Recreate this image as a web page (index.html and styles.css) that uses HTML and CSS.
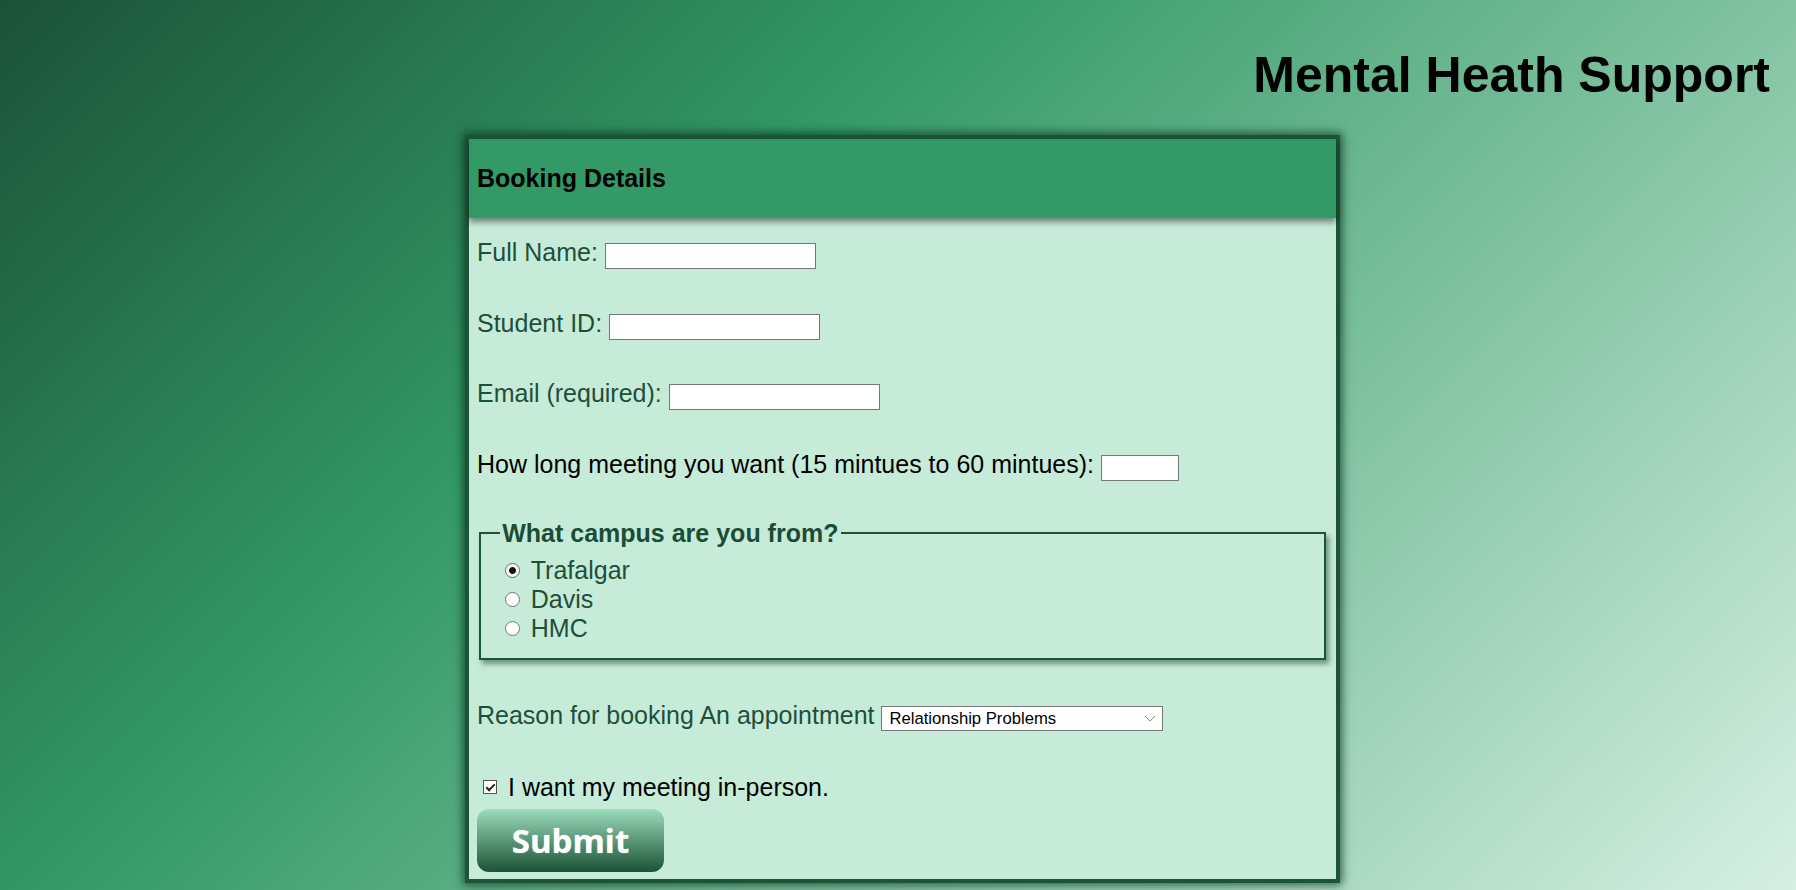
FILE: index.html
```html
<!DOCTYPE html>
<html lang="en">
<head>
<meta charset="utf-8">
<title>Mental Heath Support</title>
<link rel="stylesheet" href="styles.css">
</head>
<body>
<h1 class="site-title">Mental Heath Support</h1>
<main class="card">
  <div class="card-head"><h2 class="card-title">Booking Details</h2></div>
  <form class="card-body">
    <p class="row green"><label for="fullname">Full Name:</label> <input type="text" id="fullname" class="field"></p>
    <p class="row green"><label for="sid">Student ID:</label> <input type="text" id="sid" class="field"></p>
    <p class="row green"><label for="email">Email (required):</label> <input type="text" id="email" class="field"></p>
    <p class="row dark"><label for="dur">How long meeting you want (15 mintues to 60 mintues):</label> <input type="text" id="dur" class="field short"></p>
    <fieldset class="campus">
      <legend class="campus-legend">What campus are you from?</legend>
      <label class="choice"><input type="radio" name="campus" class="radio" checked><span>Trafalgar</span></label>
      <label class="choice"><input type="radio" name="campus" class="radio"><span>Davis</span></label>
      <label class="choice"><input type="radio" name="campus" class="radio"><span>HMC</span></label>
    </fieldset>
    <p class="row green reason"><label for="reason">Reason for booking An appointment</label> <select id="reason" class="picker">
      <option>Relationship Problems</option>
      <option>Stress</option>
      <option>Anxiety</option>
    </select></p>
    <label class="check-row"><input type="checkbox" class="check" checked><span>I want my meeting in-person.</span></label>
    <button type="button" class="submit">Submit</button>
  </form>
</main>
</body>
</html>
```

FILE: styles.css
```css
html {
  height: 100%;
  background: linear-gradient(135deg, #1b5238 0%, #339966 35%, #d6f0e3 100%);
}

body {
  margin: 0;
  min-height: 100%;
  font-family: "Liberation Sans", Arial, sans-serif;
  font-size: 25px;
  overflow: hidden;
}

.site-title {
  margin: 46px 26px 0 0;
  text-align: right;
  font-size: 50px;
  font-weight: bold;
  line-height: normal;
  color: #000;
}

.card {
  display: block;
  box-sizing: content-box;
  width: 867px;
  margin: 31px 0 0 calc(50% - 433px);
  border: 4px solid #1b5438;
  background: #c6ebd9;
  box-shadow: 0 0 9px 2px rgba(12, 48, 30, 0.75);
}

.card-head {
  position: relative;
  height: 79px;
  display: flex;
  align-items: center;
  padding: 0 8px;
  background: #339966;
  box-shadow: 0 4px 6px rgba(0, 0, 0, 0.45);
}

.card-title {
  margin: 0;
  font-size: 25px;
  font-weight: bold;
  line-height: normal;
  color: #000;
}

.card-body {
  display: block;
  padding: 20px 8px 7px 8px;
}

.row {
  margin: 39.5px 0 0 0;
  line-height: normal;
  white-space: nowrap;
}

.row:first-child {
  margin-top: 0;
}

.green {
  color: #1f4f39;
}

.dark {
  color: #000;
}

.field {
  display: inline-block;
  box-sizing: border-box;
  width: 211px;
  height: 26px;
  margin: 0;
  padding: 0 3px;
  border: 1px solid #767676;
  background: #fff;
  font-family: "Liberation Sans", Arial, sans-serif;
  font-size: 16.67px;
  vertical-align: baseline;
}

.short {
  width: 78px;
}

.campus {
  margin: 38px 2px 0 2px;
  padding: 8.75px 18.75px 15.6px 18.75px;
  border: 2px solid #1b5438;
  box-shadow: 3px 4px 5px rgba(20, 60, 40, 0.5);
  min-width: 0;
}

.campus-legend {
  padding: 0 2.5px;
  font-size: 25px;
  font-weight: bold;
  line-height: normal;
  color: #1b4d35;
}

.choice {
  display: flex;
  align-items: center;
  height: 28.75px;
  color: #1f4f39;
}

.radio {
  appearance: none;
  -webkit-appearance: none;
  box-sizing: border-box;
  width: 15px;
  height: 15px;
  margin: 0 11px 0 5px;
  border: 1px solid #767676;
  border-radius: 50%;
  background: #fff;
  flex: none;
}

.radio:checked {
  background: radial-gradient(circle, #111 0, #111 3px, #f4f4f4 3.8px, #fff 100%);
  border-color: #6a6a6a;
}

.reason {
  margin-top: 41px;
}

.picker {
  appearance: none;
  -webkit-appearance: none;
  box-sizing: border-box;
  width: 282px;
  height: 25px;
  margin: 0;
  padding: 0 0 0 7px;
  border: 1px solid #767676;
  border-radius: 0;
  background-color: #fff;
  background-image:
    linear-gradient(45deg, transparent calc(50% - 0.7px), #8a8a8a calc(50% - 0.7px), #8a8a8a calc(50% + 0.7px), transparent calc(50% + 0.7px)),
    linear-gradient(-45deg, transparent calc(50% - 0.7px), #8a8a8a calc(50% - 0.7px), #8a8a8a calc(50% + 0.7px), transparent calc(50% + 0.7px));
  background-size: 5px 5px, 5px 5px;
  background-position: right 12px center, right 7px center;
  background-repeat: no-repeat;
  color: #000;
  font-family: "Liberation Sans", Arial, sans-serif;
  font-size: 16.67px;
  vertical-align: baseline;
}

.check-row {
  display: flex;
  align-items: center;
  height: 28.75px;
  margin-top: 42px;
  color: #000;
  white-space: nowrap;
}

.check {
  appearance: none;
  -webkit-appearance: none;
  position: relative;
  box-sizing: border-box;
  width: 14px;
  height: 14px;
  margin: 0 11px 0 6px;
  border: 1px solid #555;
  background: #fff;
  flex: none;
}

.check:checked::after {
  content: "";
  position: absolute;
  left: 3.5px;
  top: 0.5px;
  width: 3px;
  height: 7px;
  border: solid #222;
  border-width: 0 2px 2px 0;
  transform: rotate(45deg);
}

.submit {
  display: block;
  width: 187px;
  height: 63px;
  margin: 7px 0 0 0;
  padding: 0;
  border: none;
  border-radius: 12px;
  background: linear-gradient(#9bdcbc, #1b5236);
  color: #fff;
  font-family: "Open Sans", "Noto Sans", sans-serif;
  font-weight: bold;
  font-size: 33px;
  line-height: 1;
  text-shadow: 0 0 1px rgba(255, 255, 255, 0.7);
  cursor: pointer;
}
```
